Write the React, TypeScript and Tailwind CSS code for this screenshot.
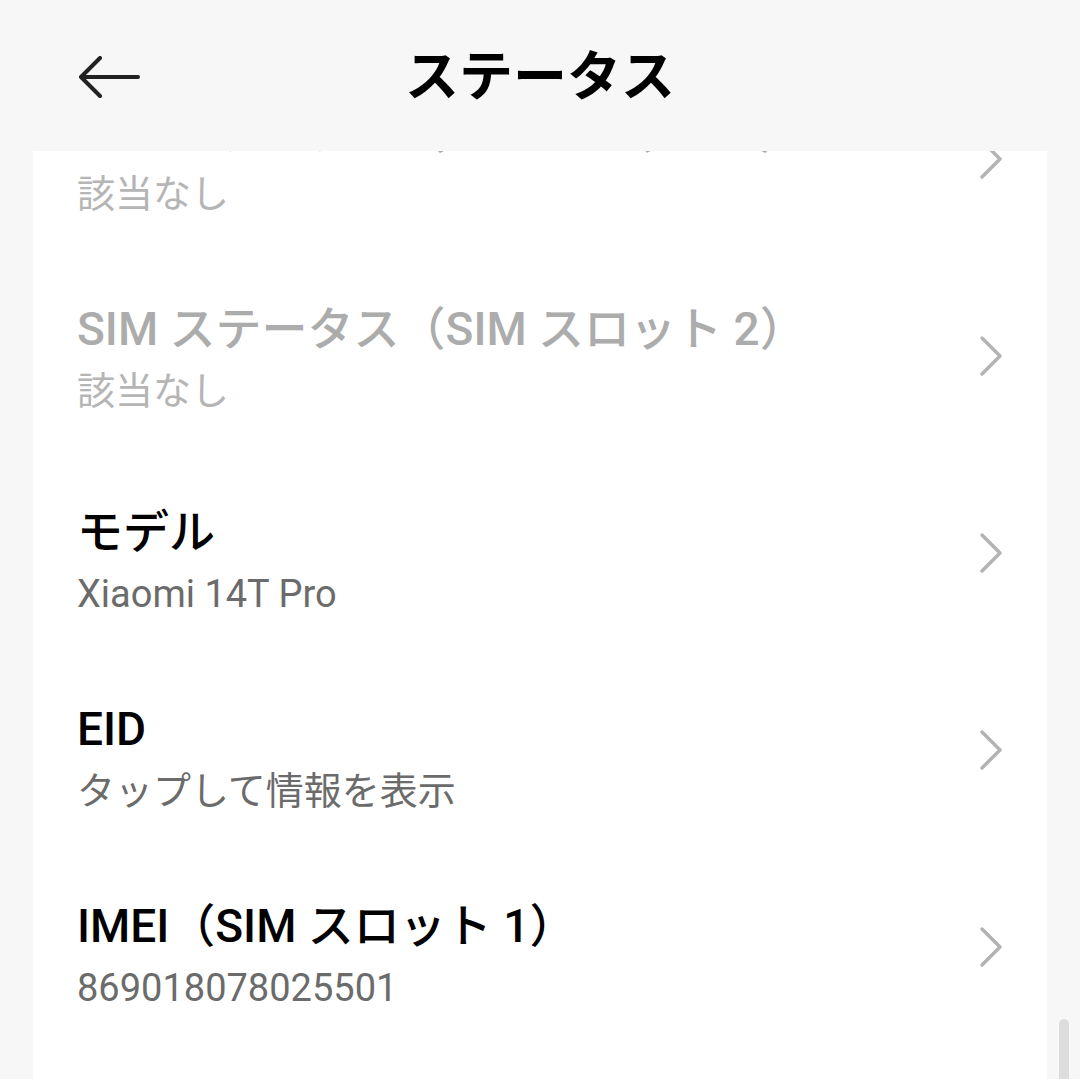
import React from "react";

type Row = { title: string; sub: string; disabled?: boolean };

const rows: Row[] = [
  { title: "SIM ステータス（SIM スロット 1）", sub: "該当なし", disabled: true },
  { title: "SIM ステータス（SIM スロット 2）", sub: "該当なし", disabled: true },
  { title: "モデル", sub: "Xiaomi 14T Pro" },
  { title: "EID", sub: "タップして情報を表示" },
  { title: "IMEI（SIM スロット 1）", sub: "869018078025501" },
  { title: "IMEI（SIM スロット 2）", sub: "869018078025519" },
];

function Chevron() {
  return (
    <svg width="24" height="42" viewBox="0 0 24 42" fill="none" className="shrink-0">
      <path d="M3 3 L21 21 L3 39" stroke="#b3b3b3" strokeWidth="3.5" strokeLinecap="round" strokeLinejoin="round" />
    </svg>
  );
}

function BackArrow() {
  return (
    <svg width="62" height="42" viewBox="0 0 62 42" fill="none">
      <path d="M60 21 H3 M22 2 L3 21 L22 40" stroke="#222222" strokeWidth="4" strokeLinecap="round" strokeLinejoin="round" />
    </svg>
  );
}

export default function App() {
  return (
    <div className="relative h-[1079px] w-full overflow-hidden bg-[#f7f7f7] font-['Roboto','Noto_Sans_CJK_JP',sans-serif]">
      <header className="grid h-[151px] grid-cols-[1fr_auto_1fr] items-center">
        <div className="pl-[78px] pt-[2px]">
          <BackArrow />
        </div>
        <h1 className="text-[54px] font-bold leading-none text-black pt-[4px]">ステータス</h1>
        <div />
      </header>
      <div className="mx-[33px] h-[928px] overflow-hidden bg-white">
        <div className="-mt-[91px]">
          {rows.map((r, i) => (
            <div key={i} className="flex h-[197px] items-center pl-[44px] pr-[44px]">
              <div className={`flex min-w-0 flex-1 flex-col ${r.disabled ? "pt-[4px]" : "pt-[16px]"}`}>
                <div
                  className={`text-[46px] font-medium leading-[56px] ${r.disabled ? "text-[#acacac]" : "text-black"}`}
                >
                  {r.title}
                </div>
                <div
                  className={`mt-[10px] text-[38px] leading-[48px] ${r.disabled ? "text-[#b5b5b5]" : "text-[#6b6b6b]"}`}
                >
                  {r.sub}
                </div>
              </div>
              <Chevron />
            </div>
          ))}
        </div>
      </div>
      <div className="absolute left-[1059px] top-[1019px] h-[90px] w-[10px] rounded-full bg-[#dcdcdc]" />
    </div>
  );
}
